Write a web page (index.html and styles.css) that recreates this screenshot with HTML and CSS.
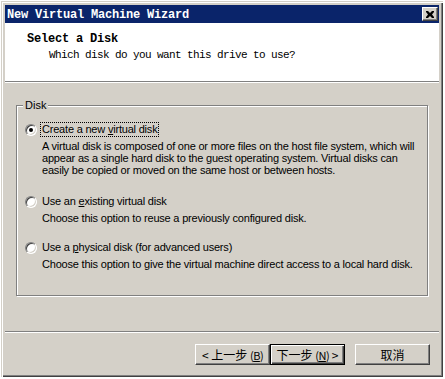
FILE: index.html
```html
<!DOCTYPE html>
<html lang="en">
<head>
    <meta charset="UTF-8">
    <title>New Virtual Machine Wizard</title>
    <link rel="stylesheet" href="styles.css">
</head>
<body>
    <div class="window">
        <div class="titlebar">
            <span class="title">New Virtual Machine Wizard</span>
            <button class="close" type="button" aria-label="Close">
                <svg width="8" height="7" viewBox="0 0 8 7">
                    <path d="M0 0h2l2 2 2-2h2v1l-2 2.5 2 2.5v1h-2l-2-2-2 2h-2v-1l2-2.5-2-2.5z" fill="#000"/>
                </svg>
            </button>
        </div>

        <div class="header">
            <div class="heading">Select a Disk</div>
            <div class="subheading">Which disk do you want this drive to use?</div>
        </div>

        <div class="page">
            <div class="group">
                <span class="group-title">Disk</span>

                <label class="option first">
                    <span class="radio checked"></span>
                    <span class="option-text focused">Create a new <u>v</u>irtual disk</span>
                </label>
                <p class="desc">A virtual disk is composed of one or more files on the host file system, which will<br>appear as a single hard disk to the guest operating system. Virtual disks can<br>easily be copied or moved on the same host or between hosts.</p>

                <label class="option second">
                    <span class="radio"></span>
                    <span class="option-text">Use an <u>e</u>xisting virtual disk</span>
                </label>
                <p class="desc">Choose this option to reuse a previously configured disk.</p>

                <label class="option third">
                    <span class="radio"></span>
                    <span class="option-text">Use a <u>p</u>hysical disk (for advanced users)</span>
                </label>
                <p class="desc">Choose this option to give the virtual machine direct access to a local hard disk.</p>
            </div>
        </div>

        <div class="footer">
            <button class="btn" type="button">&lt; 上一步 <span class="key">(<u>B</u>)</span></button>
            <button class="btn default" type="button">下一步 <span class="key">(<u>N</u>)</span> &gt;</button>
            <button class="btn cancel" type="button">取消</button>
        </div>
    </div>
</body>
</html>
```

FILE: styles.css
```css
body {
    margin: 0;
    padding: 1px;
    background: #ffffff;
    font-family: "Liberation Sans", Arial, sans-serif;
    font-size: 11px;
}
.window {
    width: 442px;
    height: 376px;
    box-sizing: border-box;
    display: flex;
    flex-direction: column;
    padding: 4px;
    background: #d4d0c8;
    box-shadow: inset 1px 1px 0 #d4d0c8, inset 2px 2px 0 #ffffff, inset -1px -1px 0 #404040, inset -2px -2px 0 #808080;
}

/* title bar */
.titlebar {
    height: 18px;
    display: flex;
    align-items: center;
    background: #0a246a;
    color: #ffffff;
}
.title {
    padding-left: 2px;
    font-family: "Liberation Mono", "DejaVu Sans Mono", monospace;
    font-weight: bold;
    font-size: 12px;
    letter-spacing: -0.2px;
    line-height: 18px;
    padding-top: 2px;
}
.close {
    margin-left: auto;
    margin-right: 1px;
    width: 16px;
    height: 14px;
    padding: 0;
    display: flex;
    align-items: center;
    justify-content: center;
    background: #d4d0c8;
    border: 1px solid;
    border-color: #ffffff #404040 #404040 #ffffff;
    box-shadow: inset -1px -1px 0 #808080;
}

/* white header */
.header {
    height: 58px;
    background: #ffffff;
    border-bottom: 1px solid #808080;
    font-family: "Liberation Mono", "DejaVu Sans Mono", monospace;
    color: #000000;
}
.heading {
    padding: 10px 0 0 22px;
    font-weight: bold;
    font-size: 12px;
    letter-spacing: -0.2px;
    line-height: 13px;
}
.subheading {
    padding: 3px 0 0 44px;
    font-size: 11px;
    letter-spacing: -0.6px;
    line-height: 13px;
}

/* page body */
.page {
    height: 248px;
    border-top: 1px solid #ffffff;
    border-bottom: 1px solid #808080;
}
.group {
    position: relative;
    width: 412px;
    height: 191px;
    box-sizing: border-box;
    margin: 22px 0 0 11px;
    padding: 16px 0 0 8px;
    border: 1px solid #808080;
    box-shadow: inset 1px 1px 0 #ffffff, 1px 1px 0 #ffffff;
}
.group-title {
    position: absolute;
    top: -7px;
    left: 6px;
    padding: 0 2px;
    background: #d4d0c8;
    line-height: 13px;
}
.option {
    display: flex;
    align-items: center;
    height: 15px;
    letter-spacing: -0.2px;
}
.second {
    margin-top: 18px;
}
.third {
    margin-top: 16px;
}
.option-text {
    margin-left: 4px;
    padding: 0 1px;
    line-height: 13px;
}
.focused {
    outline: 1px dotted #000000;
    outline-offset: 0;
}
.radio {
    position: relative;
    width: 10px;
    height: 10px;
    border: 1px solid;
    border-color: #808080 #ffffff #ffffff #808080;
    border-radius: 50%;
    background: #ffffff;
    box-shadow: inset 1px 1px 0 #404040, inset -1px -1px 0 #d4d0c8;
}
.radio.checked::after {
    content: "";
    position: absolute;
    left: 3px;
    top: 3px;
    width: 4px;
    height: 4px;
    border-radius: 50%;
    background: #000000;
}
.desc {
    margin: 3px 0 0 17px;
    line-height: 12px;
    letter-spacing: -0.2px;
    white-space: nowrap;
}

/* buttons */
.footer {
    flex: 1;
    display: flex;
    justify-content: flex-end;
    align-items: flex-start;
    padding: 11px 9px 0 0;
    border-top: 1px solid #ffffff;
}
.btn {
    width: 75px;
    height: 21px;
    padding: 0;
    background: #d4d0c8;
    border: 1px solid;
    border-color: #ffffff #404040 #404040 #ffffff;
    box-shadow: inset -1px -1px 0 #808080;
    font-family: "Noto Sans CJK SC", sans-serif;
    font-size: 12px;
    line-height: 17px;
    color: #000000;
    white-space: nowrap;
}
.key {
    font-size: 11px;
    letter-spacing: -0.5px;
}
.default {
    border-color: #000000;
    box-shadow: inset 1px 1px 0 #ffffff, inset -1px -1px 0 #404040, inset -2px -2px 0 #808080;
}
.cancel {
    margin-left: 10px;
}
```
